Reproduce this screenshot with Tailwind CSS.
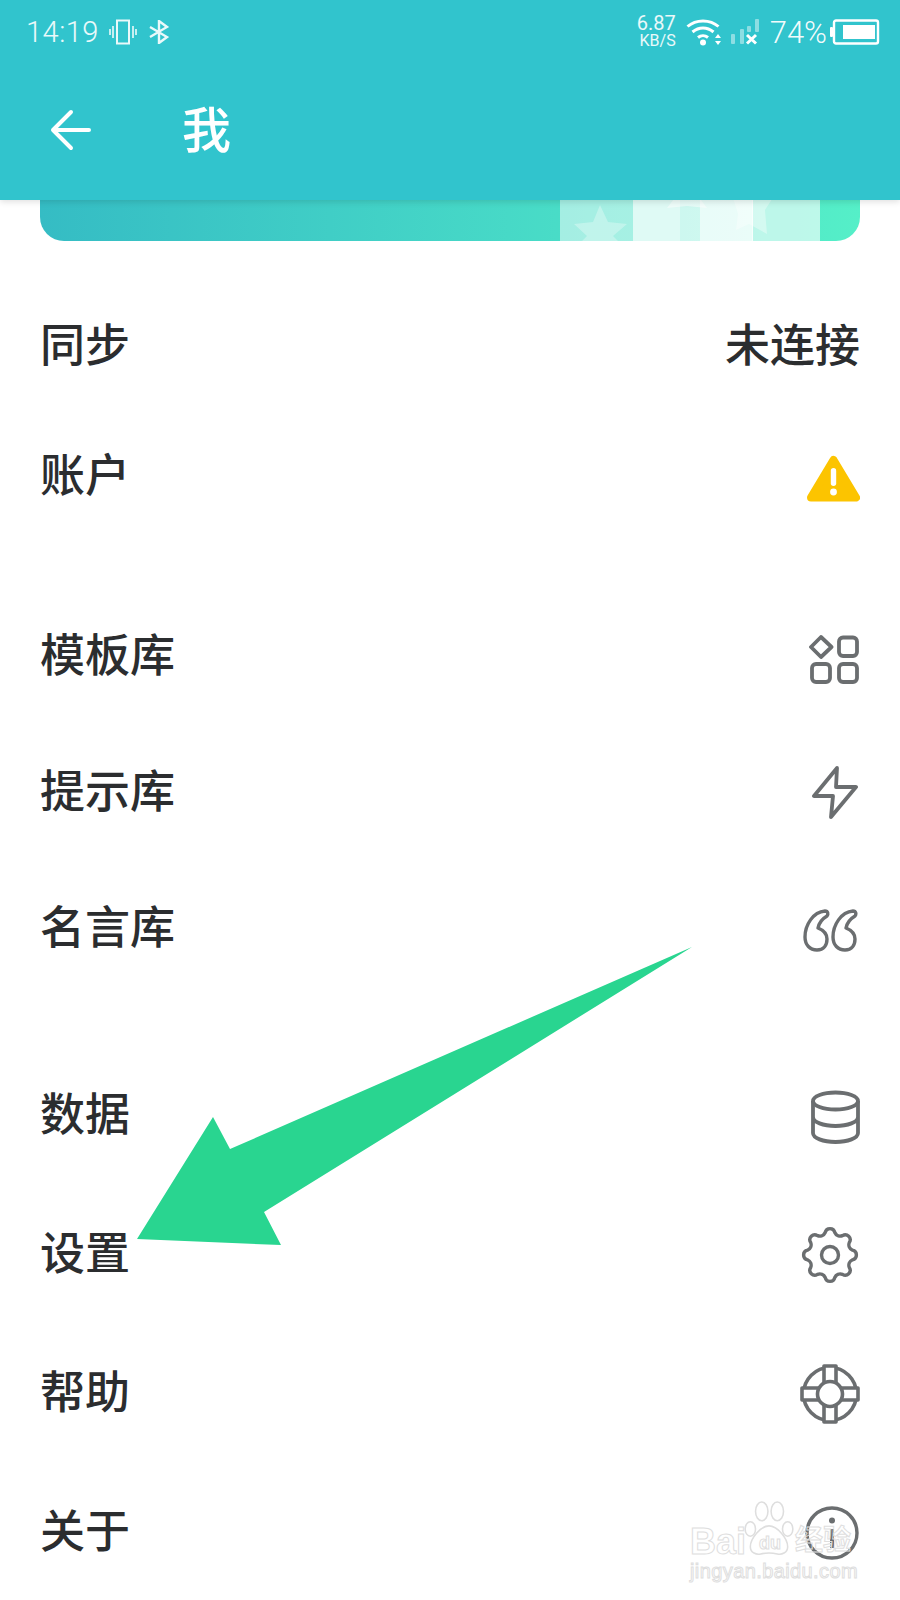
<!DOCTYPE html>
<html lang="zh-CN">
<head>
<meta charset="UTF-8">
<title>我</title>
<script src="https://cdn.jsdelivr.net/npm/@tailwindcss/browser@4"></script>
</head>
<body class="bg-white">
<div class="relative w-[900px] h-[1600px] overflow-hidden bg-white font-['Noto_Sans_CJK_SC','Noto_Sans',sans-serif] text-[#2b2d2f]">

  <!-- Header -->
  <header class="relative z-10 h-[200px] bg-[#31c4cd] text-white shadow-[0_2px_6px_rgba(0,0,0,0.12)]">
    <!-- Status bar -->
    <div class="flex items-center justify-between h-[64px] pl-[26px] pr-[20px]">
      <div class="flex items-center">
        <span class="font-['Roboto',sans-serif] font-light text-[29px] leading-none tracking-[0.5px] text-white/90">14:19</span>
        <svg class="ml-[10px]" width="28" height="26" viewBox="0 0 28 26" fill="none" stroke="white" stroke-opacity="0.9">
          <rect x="8" y="1.5" width="12" height="23" stroke-width="2"/>
          <path d="M4 7v12M1 10v6M24 7v12M27 10v6" stroke-width="1.6"/>
        </svg>
        <svg class="ml-[11px]" width="22" height="24" viewBox="0 0 22 24" fill="none" stroke="white" stroke-opacity="0.9" stroke-width="2.4">
          <path d="M2 7l17 10-8 6V1l8 6L2 17"/>
        </svg>
      </div>
      <div class="flex items-center">
        <div class="flex flex-col items-end -mt-[2px] font-['Roboto',sans-serif] text-white/90">
          <span class="text-[20px] leading-[20px]">6.87</span>
          <span class="text-[16px] leading-[16px]">KB/S</span>
        </div>
        <svg class="ml-[10px]" width="36" height="28" viewBox="0 0 36 28" fill="none" stroke="white" stroke-width="3">
          <path d="M1.5 8.5C10 1 24 1 32.500 8.500M6.500 14C13 8.500 21 8.500 27.500 14M12 19.500c3-2.500 7-2.500 10 0"/>
          <circle cx="17" cy="24.500" r="3" fill="white" stroke="none"/>
          <path d="M32 16l3 4h-6zM32 27l3-4h-6z" fill="white" stroke="none"/>
        </svg>
        <svg class="ml-[9px]" width="28" height="26" viewBox="0 0 28 26">
          <rect x="0" y="15" width="4" height="10" rx="1" fill="white" fill-opacity="0.45"/>
          <rect x="9" y="10" width="4" height="15" rx="1" fill="white" fill-opacity="0.45"/>
          <rect x="16" y="7" width="4" height="6" rx="1" fill="white" fill-opacity="0.45"/>
          <rect x="24" y="0" width="4" height="13" rx="1" fill="white" fill-opacity="0.45"/>
          <path d="M16 16l9 8.500M25 16l-9 8.500" stroke="white" stroke-width="3"/>
        </svg>
        <span class="ml-[11px] font-['Roboto',sans-serif] font-light text-[31px] leading-none text-white/95">74%</span>
        <svg class="ml-[3px]" width="50" height="26" viewBox="0 0 50 26">
          <rect x="0" y="8" width="3" height="10" rx="1" fill="white"/>
          <rect x="4" y="1.500" width="44" height="23" rx="2" fill="none" stroke="white" stroke-width="2.400"/>
          <rect x="13" y="6" width="32" height="14" fill="white"/>
        </svg>
      </div>
    </div>
    <!-- Title row -->
    <div class="flex items-center h-[132px] pl-[50px]">
      <svg width="42" height="42" viewBox="0 0 42 42" fill="none" stroke="white" stroke-width="4" stroke-linecap="round" stroke-linejoin="round">
        <path d="M39 21H3M21 3L3 21l18 18"/>
      </svg>
      <h1 class="ml-[90px] mb-[8px] text-[49px] leading-none font-medium">我</h1>
    </div>
  </header>

  <!-- Banner, mostly scrolled under the header -->
  <div class="relative mx-[40px] h-[41px] rounded-b-[24px] overflow-hidden bg-gradient-to-r from-[#35bcc4] to-[#55efc8]">
    <div class="absolute inset-y-0 left-[520px] w-[73px] bg-white/50"></div>
    <div class="absolute inset-y-0 left-[593px] w-[47px] bg-white/82"></div>
    <div class="absolute inset-y-0 left-[640px] w-[20px] bg-white/72"></div>
    <div class="absolute inset-y-0 left-[660px] w-[53px] bg-white/88"></div>
    <div class="absolute inset-y-0 left-[712px] w-[68px] bg-white/62"></div>
    <svg class="absolute inset-0" width="820" height="41" viewBox="0 0 820 41" fill="white">
      <path d="M560 5l8 17 19 2-14 12 5 5h-36l5-5-13-12 19-2z" fill-opacity="0.3"/>
      <path d="M647-18l14 18 6 8-20-2-20 2z" fill-opacity="0.5"/>
      <path d="M690-12l22 10 22-2-9 14 2 24-18-10-13 6 2-16z" fill-opacity="0.35"/>
    </svg>
  </div>

  <!-- Group 1 -->
  <section class="mt-[40px] mb-[47px]">
    <div class="flex items-center justify-between h-[130px] px-[40px]">
      <span class="pb-[8px] text-[45px] leading-none font-medium">同步</span>
      <span class="pb-[8px] text-[45px] leading-none font-medium">未连接</span>
    </div>
    <div class="flex items-center justify-between h-[130px] px-[40px]">
      <span class="pb-[8px] text-[45px] leading-none font-medium">账户</span>
      <svg class="mt-[4px]" width="53" height="49" viewBox="0 0 53 49">
        <path d="M26.500 6L49 43.500H4z" fill="#fcc400" stroke="#fcc400" stroke-width="8" stroke-linejoin="round"/>
        <rect x="23.800" y="14" width="5.400" height="18" rx="2.700" fill="white"/>
        <circle cx="26.500" cy="38" r="3.400" fill="white"/>
      </svg>
    </div>
  </section>

  <!-- Group 2 -->
  <section class="mb-[50px]">
    <div class="flex items-center justify-between h-[136px] px-[40px]">
      <span class="pb-[8px] text-[45px] leading-none font-medium">模板库</span>
      <svg class="mt-[6px] mr-[1px]" width="50" height="49" viewBox="0 0 50 49" fill="none" stroke="#6b6e70" stroke-width="3.800" stroke-linejoin="round">
        <path d="M12 2L22.500 12 12 22 2 12z"/>
        <rect x="30" y="2.500" width="18" height="18.500" rx="4"/>
        <rect x="3" y="29" width="18" height="18" rx="4"/>
        <rect x="30" y="29" width="18" height="18" rx="4"/>
      </svg>
    </div>
    <div class="flex items-center justify-between h-[136px] px-[40px]">
      <span class="pb-[8px] text-[45px] leading-none font-medium">提示库</span>
      <svg class="mr-[2px]" width="46" height="53" viewBox="0 0 46 53" fill="none" stroke="#6b6e70" stroke-width="3.800" stroke-linejoin="round" stroke-linecap="round">
        <path d="M25 2L2 30h19l-2 21 25-30H24z"/>
      </svg>
    </div>
    <div class="flex items-center justify-between h-[136px] px-[40px]">
      <span class="pb-[8px] text-[45px] leading-none font-medium">名言库</span>
      <svg class="mt-[4px] mr-[2px]" width="55" height="43" viewBox="0 0 55 43" fill="none" stroke="#6b6e70" stroke-width="3.400" stroke-linejoin="round" stroke-linecap="round">
        <path d="M22 2C10 3 2 16 2 28c0 8 5 13 12 13s10-5 10-11c0-5-4-9-9-11 1-5 4-9 9-12 1.500-2 1-5-2-5z"/>
        <path d="M50 2C38 3 30 16 30 28c0 8 5 13 12 13s10-5 10-11c0-5-4-9-9-11 1-5 4-9 9-12 1.500-2 1-5-2-5z"/>
      </svg>
    </div>
  </section>

  <!-- Group 3 -->
  <section>
    <div class="flex items-center justify-between h-[139px] px-[40px]">
      <span class="pb-[8px] text-[45px] leading-none font-medium">数据</span>
      <svg class="mt-[2px]" width="49" height="54" viewBox="0 0 49 54" fill="none" stroke="#6b6e70" stroke-width="3.800">
        <ellipse cx="24.500" cy="11" rx="22.500" ry="8.500"/>
        <path d="M2 11v32c0 5 10 9 22.500 9S47 48 47 43V11M2 27c0 5 10 9 22.500 9S47 32 47 27"/>
      </svg>
    </div>
    <div class="flex items-center justify-between h-[139px] px-[40px]">
      <span class="pb-[8px] text-[45px] leading-none font-medium">设置</span>
      <svg class="mr-[1px]" width="58" height="58" viewBox="-29 -29 58 58" fill="none" stroke="#6b6e70" stroke-width="3.400" stroke-linejoin="round">
        <path d="M-4.800-22.500A4.900 4.900 0 0 1 4.800-22.500A6 6 0 0 0 12.500-19.300A4.900 4.900 0 0 1 19.300-12.500A6 6 0 0 0 22.500-4.800A4.900 4.900 0 0 1 22.500 4.800A6 6 0 0 0 19.300 12.500A4.900 4.900 0 0 1 12.500 19.300A6 6 0 0 0 4.800 22.500A4.900 4.900 0 0 1 -4.800 22.500A6 6 0 0 0 -12.500 19.300A4.900 4.900 0 0 1 -19.300 12.500A6 6 0 0 0 -22.500 4.800A4.900 4.900 0 0 1 -22.500-4.800A6 6 0 0 0 -19.300-12.500A4.900 4.900 0 0 1 -12.500-19.300A6 6 0 0 0 -4.800-22.500z"/>
        <circle r="8.500"/>
      </svg>
    </div>
    <div class="flex items-center justify-between h-[139px] px-[40px]">
      <span class="pb-[8px] text-[45px] leading-none font-medium">帮助</span>
      <svg width="60" height="60" viewBox="-30 -30 60 60" fill="none" stroke="#6b6e70" stroke-width="3.600" stroke-linejoin="round">
        <circle r="26.500"/>
        <path d="M-6-28h12v56h-12zM-28-6h56v12h-56z" fill="white"/>
        <circle r="12.500" fill="white"/>
      </svg>
    </div>
    <div class="flex items-center justify-between h-[139px] px-[40px]">
      <span class="pb-[8px] text-[45px] leading-none font-medium">关于</span>
      <svg class="mr-[1px]" width="54" height="54" viewBox="0 0 54 54" fill="none" stroke="#6b6e70" stroke-width="3.400">
        <circle cx="27" cy="27" r="25"/>
        <circle cx="27" cy="14.500" r="3" fill="#6b6e70" stroke="none"/>
        <path d="M27 23v19" stroke-width="4"/>
      </svg>
    </div>
  </section>

  <!-- Annotation arrow -->
  <svg class="absolute inset-0 z-20 pointer-events-none" width="900" height="1600" viewBox="0 0 900 1600">
    <polygon points="692,947 230,1149 213,1117 137,1239 281,1245 264,1212" fill="#29d590"/>
  </svg>

  <!-- Watermark -->
  <div class="absolute z-30 left-[690px] top-[1500px] w-[165px] h-[84px] pointer-events-none">
    <svg class="absolute left-[50px] top-[1px]" width="58" height="56" viewBox="0 0 50 54" fill="white" fill-opacity="0.5" stroke="#dedede" stroke-width="1.500">
      <ellipse cx="7" cy="27" rx="5" ry="7"/>
      <ellipse cx="18" cy="10" rx="6" ry="9"/>
      <ellipse cx="33" cy="10" rx="6" ry="9"/>
      <ellipse cx="43" cy="27" rx="5" ry="7"/>
      <path d="M25 24c8 0 18 12 18 20 0 6-6 8-10 7-5-1-11-1-16 0-4 1-10-1-10-7 0-8 10-20 18-20z"/>
    </svg>
    <span class="absolute left-0 top-[24px] text-[36px] leading-none font-['Liberation_Sans',sans-serif] font-bold text-transparent [-webkit-text-stroke:1px_#dedede]">Bai</span>
    <span class="absolute left-[69px] top-[34px] text-[18px] leading-none font-['Liberation_Sans',sans-serif] font-bold text-transparent [-webkit-text-stroke:1px_#dedede]">du</span>
    <span class="absolute left-[105px] top-[24px] text-[28px] leading-none font-bold text-transparent [-webkit-text-stroke:1px_#dedede]">经验</span>
    <span class="absolute left-0 top-[61px] text-[20px] leading-none font-['Liberation_Sans',sans-serif] tracking-[0.4px] whitespace-nowrap text-transparent [-webkit-text-stroke:1px_#dedede]">jingyan.baidu.com</span>
  </div>
</div>
</body>
</html>
